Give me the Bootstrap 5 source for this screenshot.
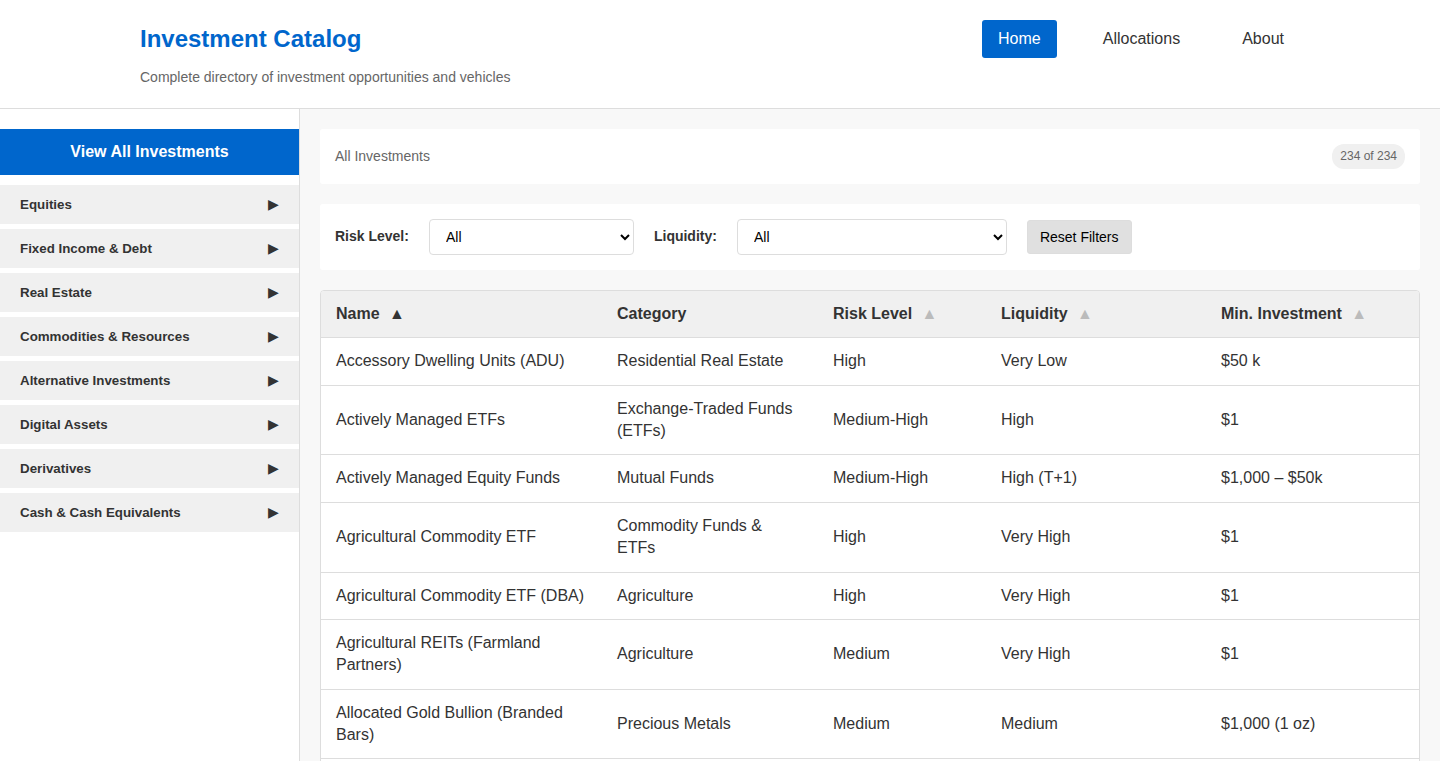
<!doctype html>
<html lang="en">
  <head>
    <meta charset="UTF-8" />
    <meta name="viewport" content="width=device-width, initial-scale=1" />
    <title>Investment Catalog</title>
    <link href="https://cdn.jsdelivr.net/npm/bootstrap@5.3.0/dist/css/bootstrap.min.css" rel="stylesheet" />
    <style>
      body {
        font-family: "Liberation Sans", Arial, sans-serif;
        font-size: 16px;
        line-height: 1.4;
        color: #333;
        background: #f8f8f8;
      }
      .site-header {
        height: 109px;
        background: #fff;
        border-bottom: 1px solid #ddd;
        padding: 20px 140px 0;
      }
      .site-title {
        font-size: 24px;
        line-height: 38px;
        font-weight: 700;
        color: #0066cc;
        margin: 0 0 9px;
      }
      .site-sub {
        font-size: 14px;
        line-height: 20px;
        color: #666;
        margin: 0;
      }
      .top-nav {
        width: 318px;
        margin-right: 0;
      }
      .top-link {
        display: block;
        height: 38px;
        line-height: 38px;
        padding: 0 16px;
        color: #333;
        text-decoration: none;
        border-radius: 3px;
      }
      .top-link.active {
        background: #0066cc;
        color: #fff;
      }
      .side-panel {
        width: 300px;
        flex: none;
        background: #fff;
        border-right: 1px solid #ddd;
        padding-top: 20px;
      }
      .all-link {
        display: block;
        height: 46px;
        line-height: 46px;
        text-align: center;
        font-weight: 700;
        color: #fff;
        background: #0066cc;
        text-decoration: none;
        margin-bottom: 10px;
      }
      .cat-link {
        height: 39px;
        padding: 2px 20px 0;
        margin-bottom: 5px;
        background: #f0f0f0;
        color: #333;
        font-size: 13.33px;
        font-weight: 700;
        text-decoration: none;
      }
      .cat-arrow {
        font-size: 14.4px;
        font-weight: 400;
        margin-top: -2px;
      }
      .main-area {
        min-width: 0;
        padding: 20px;
      }
      .panel-box {
        background: #fff;
        border-radius: 3px;
        padding: 0 15px;
        margin-bottom: 20px;
      }
      .crumb-box {
        height: 54.8px;
        font-size: 14px;
        color: #666;
      }
      .count-pill {
        background: #f0f0f0;
        font-size: 12px;
        line-height: 17px;
        padding: 4px 8px;
        border-radius: 12px;
        color: #666;
      }
      .filter-box {
        height: 66px;
      }
      .filter-label {
        font-size: 14px;
        font-weight: 700;
        margin: 0 20px 0 0;
      }
      .filter-select {
        height: 36px;
        font-size: 14px;
        font-family: "Liberation Sans", Arial, sans-serif;
        color: #000;
        background: #fff;
        border: 1px solid #ddd;
        border-radius: 4px;
        padding: 0 12px;
        margin-right: 20px;
      }
      .select-risk {
        width: 205px;
      }
      .select-liq {
        width: 270px;
      }
      .reset-btn {
        height: 34px;
        padding: 2px 12px 0;
        font-size: 14px;
        color: #000;
        background: #e0e0e0;
        border: 1px solid #ddd;
        border-radius: 3px;
      }
      .table-box {
        background: #fff;
        border: 1px solid #ddd;
        border-radius: 4px;
        overflow: hidden;
      }
      .invest-table {
        width: 100%;
        table-layout: fixed;
        border-collapse: collapse;
        margin: 0;
      }
      .invest-table th {
        background: #f0f0f0;
        font-weight: 700;
        padding: 12px 15px;
        border-bottom: 1px solid #ddd;
        color: #333;
      }
      .invest-table td {
        padding: 12px 15px;
        border-bottom: 1px solid #ddd;
        vertical-align: middle;
        color: #333;
      }
      .sort-mark {
        font-size: 16px;
        font-weight: 400;
        margin-left: 5px;
        color: #333;
      }
      .sort-mark.idle {
        color: #bbb;
      }
    </style>
    <script src="https://cdn.jsdelivr.net/npm/bootstrap@5.3.0/dist/js/bootstrap.bundle.min.js"></script>
  </head>
  <body>
    <header class="site-header d-flex justify-content-between align-items-start">
      <div>
        <h1 class="site-title">Investment Catalog</h1>
        <p class="site-sub">Complete directory of investment opportunities and vehicles</p>
      </div>
      <nav class="top-nav d-flex justify-content-between">
        <a class="top-link active" href="#">Home</a>
        <a class="top-link" href="#">Allocations</a>
        <a class="top-link" href="#">About</a>
      </nav>
    </header>

    <div class="d-flex">
      <aside class="side-panel">
        <a class="all-link" href="#">View All Investments</a>
        <a class="cat-link d-flex justify-content-between align-items-center" href="#">Equities <span class="cat-arrow">▶</span></a>
        <a class="cat-link d-flex justify-content-between align-items-center" href="#">Fixed Income &amp; Debt <span class="cat-arrow">▶</span></a>
        <a class="cat-link d-flex justify-content-between align-items-center" href="#">Real Estate <span class="cat-arrow">▶</span></a>
        <a class="cat-link d-flex justify-content-between align-items-center" href="#">Commodities &amp; Resources <span class="cat-arrow">▶</span></a>
        <a class="cat-link d-flex justify-content-between align-items-center" href="#">Alternative Investments <span class="cat-arrow">▶</span></a>
        <a class="cat-link d-flex justify-content-between align-items-center" href="#">Digital Assets <span class="cat-arrow">▶</span></a>
        <a class="cat-link d-flex justify-content-between align-items-center" href="#">Derivatives <span class="cat-arrow">▶</span></a>
        <a class="cat-link d-flex justify-content-between align-items-center" href="#">Cash &amp; Cash Equivalents <span class="cat-arrow">▶</span></a>
      </aside>

      <main class="main-area flex-grow-1">
        <div class="panel-box crumb-box d-flex justify-content-between align-items-center">
          <span>All Investments</span>
          <span class="count-pill">234 of 234</span>
        </div>

        <div class="panel-box filter-box d-flex align-items-center">
          <label class="filter-label" for="riskFilter">Risk Level:</label>
          <select class="filter-select select-risk" id="riskFilter"><option>All</option></select>
          <label class="filter-label" for="liquidityFilter">Liquidity:</label>
          <select class="filter-select select-liq" id="liquidityFilter"><option>All</option></select>
          <button class="reset-btn" type="button">Reset Filters</button>
        </div>

        <div class="table-box">
          <table class="invest-table">
            <colgroup>
              <col style="width: 281px" />
              <col style="width: 216px" />
              <col style="width: 168px" />
              <col style="width: 220px" />
              <col />
            </colgroup>
            <thead>
              <tr>
                <th>Name <span class="sort-mark">▲</span></th>
                <th>Category</th>
                <th>Risk Level <span class="sort-mark idle">▲</span></th>
                <th>Liquidity <span class="sort-mark idle">▲</span></th>
                <th>Min. Investment <span class="sort-mark idle">▲</span></th>
              </tr>
            </thead>
            <tbody>
              <tr><td>Accessory Dwelling Units (ADU)</td><td>Residential Real Estate</td><td>High</td><td>Very Low</td><td>$50 k</td></tr>
              <tr><td>Actively Managed ETFs</td><td>Exchange-Traded Funds (ETFs)</td><td>Medium-High</td><td>High</td><td>$1</td></tr>
              <tr><td>Actively Managed Equity Funds</td><td>Mutual Funds</td><td>Medium-High</td><td>High (T+1)</td><td>$1,000 – $50k</td></tr>
              <tr><td>Agricultural Commodity ETF</td><td>Commodity Funds &amp; ETFs</td><td>High</td><td>Very High</td><td>$1</td></tr>
              <tr><td>Agricultural Commodity ETF (DBA)</td><td>Agriculture</td><td>High</td><td>Very High</td><td>$1</td></tr>
              <tr><td>Agricultural REITs (Farmland Partners)</td><td>Agriculture</td><td>Medium</td><td>Very High</td><td>$1</td></tr>
              <tr><td>Allocated Gold Bullion (Branded Bars)</td><td>Precious Metals</td><td>Medium</td><td>Medium</td><td>$1,000 (1 oz)</td></tr>
              <tr><td colspan="5">&nbsp;</td></tr>
            </tbody>
          </table>
        </div>
      </main>
    </div>
  </body>
</html>
